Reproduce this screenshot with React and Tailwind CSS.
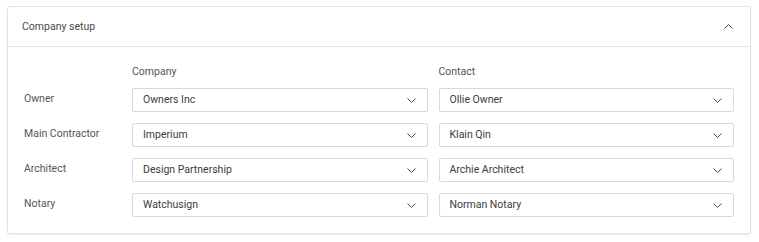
import React from "react";

const rows = [
  { label: "Owner", company: "Owners Inc", contact: "Ollie Owner" },
  { label: "Main Contractor", company: "Imperium", contact: "Klain Qin" },
  { label: "Architect", company: "Design Partnership", contact: "Archie Architect" },
  { label: "Notary", company: "Watchusign", contact: "Norman Notary" },
];

function ChevronDown() {
  return (
    <svg width="9" height="5" viewBox="0 0 9 5" fill="none" className="shrink-0 mr-[1px]">
      <path d="M0.5 0.5l4 4 4-4" stroke="#4a4a4a" strokeWidth="1" />
    </svg>
  );
}

function Select({ value }) {
  return (
    <div className="h-6 flex items-center justify-between border border-[#d9d9d9] rounded-[2px] bg-white pl-[10px] pr-[10px]">
      <span className="text-[10.5px] text-[#3c3c3c]">{value}</span>
      <ChevronDown />
    </div>
  );
}

export default function App() {
  return (
    <div className="w-[759px] h-[242px] bg-white pt-[6px] pl-[7px]" style={{ fontFamily: 'Roboto, "Noto Sans", sans-serif' }}>
      <div className="w-[744px] border border-[#e3e3e3] rounded-[3px] shadow-[0_1px_2px_rgba(0,0,0,0.08)] bg-white">
        <div className="h-10 flex items-center justify-between pl-[14px] pr-[17px] border-b border-[#e3e3e3]">
          <span className="text-[10.5px] text-[#4a4a4a] mt-[1px]">Company setup</span>
          <svg width="9" height="5" viewBox="0 0 9 5" fill="none">
            <path d="M0.5 4.5l4-4 4 4" stroke="#4a4a4a" strokeWidth="1" />
          </svg>
        </div>
        <div className="px-4 pt-[17px] pb-4 grid grid-cols-[97px_1fr_1fr] gap-x-[11px]">
          <div />
          <div className="h-4 flex items-center text-[10.5px] text-[#555]">Company</div>
          <div className="h-4 flex items-center text-[10.5px] text-[#555]">Contact</div>
          {rows.map((r, i) => (
            <React.Fragment key={r.label}>
              <div className={`${i === 0 ? "mt-[8px]" : "mt-[11px]"} h-6 flex items-start pt-[3px] text-[10.5px] text-[#555]`}>{r.label}</div>
              <div className={i === 0 ? "mt-[8px]" : "mt-[11px]"}><Select value={r.company} /></div>
              <div className={i === 0 ? "mt-[8px]" : "mt-[11px]"}><Select value={r.contact} /></div>
            </React.Fragment>
          ))}
        </div>
      </div>
    </div>
  );
}
